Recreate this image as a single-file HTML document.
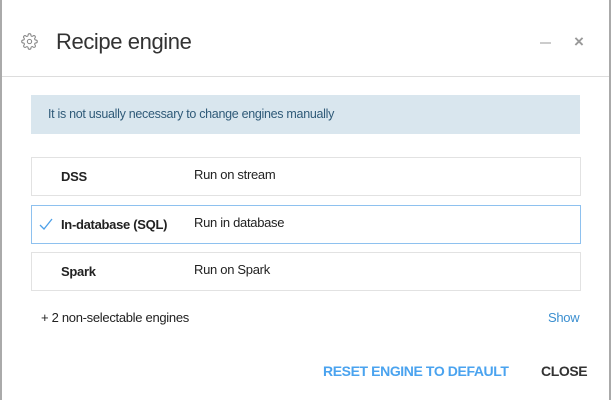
<!DOCTYPE html>
<html><head><style>
body{margin:0;width:611px;height:400px;background:#fff;font-family:"Liberation Sans",sans-serif;position:relative;overflow:hidden}
.a{position:absolute;white-space:nowrap}
.row{position:absolute;left:31px;width:548px;height:37px;border:1px solid #e2e2e2;background:#fff}
.lbl{position:absolute;left:29px;top:11px;font-weight:bold;font-size:13px;color:#222;letter-spacing:-0.3px}
.desc{position:absolute;left:162px;top:9px;font-size:13px;color:#222;letter-spacing:-0.3px}
</style></head><body>
<div class="a" style="left:0;top:0;width:2px;height:400px;background:#aaa"></div>
<div class="a" style="right:0;top:0;width:2px;height:400px;background:#aaa"></div>
<svg class="a" style="left:21px;top:33px" width="17" height="17" viewBox="0 0 24 24" fill="none" stroke="#888" stroke-width="1.5"><circle cx="12" cy="12" r="3"/><path d="M19.4 15a1.65 1.65 0 0 0 .33 1.82l.06.06a2 2 0 1 1-2.83 2.83l-.06-.06a1.65 1.65 0 0 0-1.82-.33 1.65 1.65 0 0 0-1 1.51V21a2 2 0 1 1-4 0v-.09A1.65 1.65 0 0 0 9 19.4a1.65 1.65 0 0 0-1.82.33l-.06.06a2 2 0 1 1-2.83-2.83l.06-.06A1.65 1.65 0 0 0 4.68 15a1.65 1.65 0 0 0-1.51-1H3a2 2 0 1 1 0-4h.09A1.65 1.65 0 0 0 4.6 9a1.65 1.65 0 0 0-.33-1.82l-.06-.06a2 2 0 1 1 2.83-2.83l.06.06A1.65 1.65 0 0 0 9 4.68a1.65 1.65 0 0 0 1-1.51V3a2 2 0 1 1 4 0v.09a1.65 1.65 0 0 0 1 1.51 1.65 1.65 0 0 0 1.82-.33l.06-.06a2 2 0 1 1 2.83 2.83l-.06.06A1.65 1.65 0 0 0 19.4 9a1.65 1.65 0 0 0 1.51 1H21a2 2 0 1 1 0 4h-.09a1.65 1.65 0 0 0-1.51 1z"/></svg>
<div class="a" style="left:56px;top:29px;font-size:22px;color:#333;letter-spacing:-0.4px">Recipe engine</div>
<div class="a" style="left:540px;top:42px;width:11px;height:2px;background:#ccc"></div>
<div class="a" style="left:574px;top:32px;font-size:17px;color:#999;font-weight:bold">×</div>
<div class="a" style="left:2px;top:76px;width:607px;height:1px;background:#ddd"></div>
<div class="a" style="left:31px;top:95px;width:549px;height:39px;background:#d9e6ee"></div>
<div class="a" style="left:48px;top:107px;font-size:12.5px;color:#2f5a78;letter-spacing:-0.3px">It is not usually necessary to change engines manually</div>
<div class="row" style="top:157px"><div class="lbl">DSS</div><div class="desc">Run on stream</div></div>
<div class="row" style="top:205px;border-color:#8ec1ef"><svg class="a" style="left:7px;top:12px" width="14" height="12" viewBox="0 0 14 12"><path d="M1 7 L5 11 L13 1" fill="none" stroke="#4da0e8" stroke-width="1.3"/></svg><div class="lbl">In-database (SQL)</div><div class="desc">Run in database</div></div>
<div class="row" style="top:252px"><div class="lbl">Spark</div><div class="desc">Run on Spark</div></div>
<div class="a" style="left:41px;top:310px;font-size:13px;color:#222;letter-spacing:-0.3px">+ 2 non-selectable engines</div>
<div class="a" style="left:548px;top:310px;font-size:13px;color:#3b8fd0;letter-spacing:-0.3px">Show</div>
<div class="a" style="left:323px;top:363px;font-size:14px;color:#4aa3ef;font-weight:bold;letter-spacing:-0.4px">RESET ENGINE TO DEFAULT</div>
<div class="a" style="left:541px;top:363px;font-size:14px;color:#333;font-weight:bold;letter-spacing:-0.4px">CLOSE</div>
</body></html>
